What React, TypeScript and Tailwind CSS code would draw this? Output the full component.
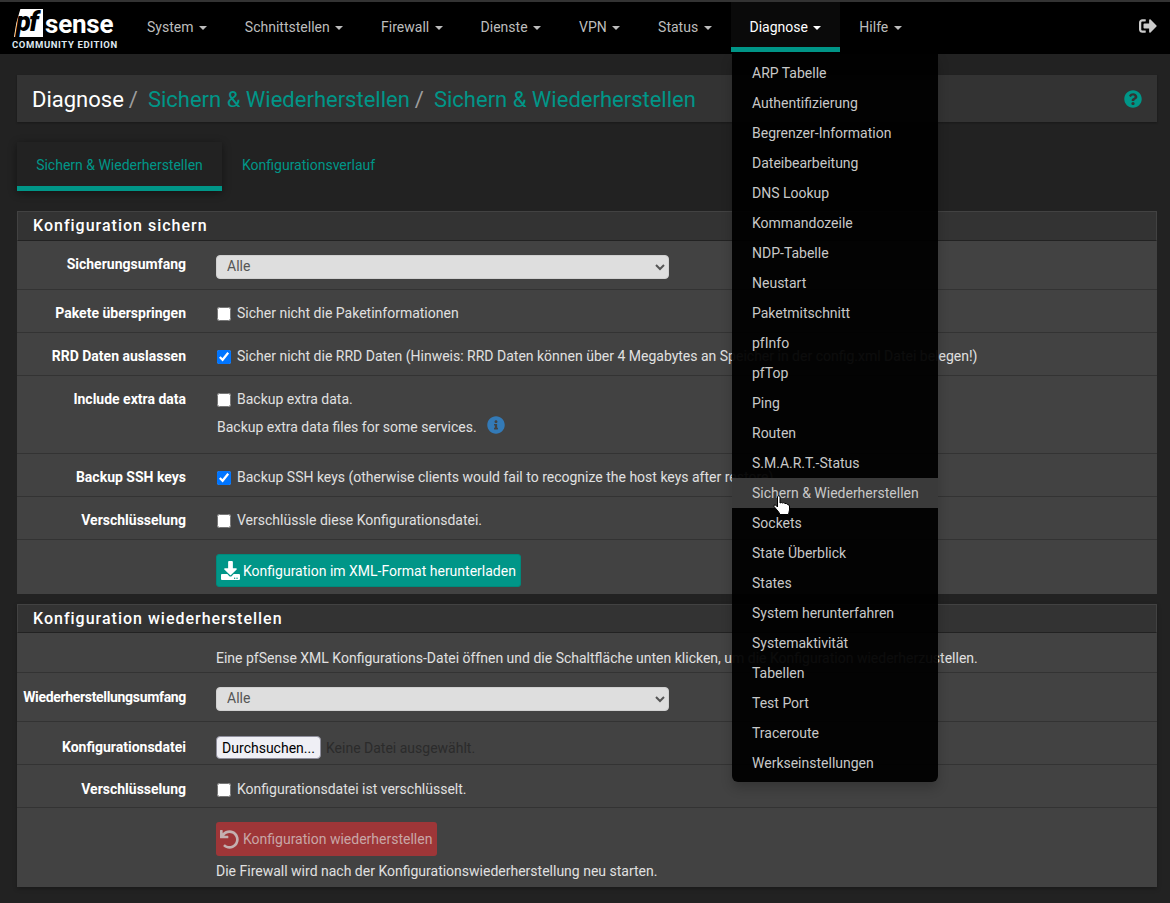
import React from "react";
import { FaSignOutAlt, FaQuestionCircle, FaInfoCircle, FaDownload, FaUndo } from "react-icons/fa";

const navItems = ["System", "Schnittstellen", "Firewall", "Dienste", "VPN", "Status", "Diagnose", "Hilfe"];
const menu = [
  "ARP Tabelle", "Authentifizierung", "Begrenzer-Information", "Dateibearbeitung", "DNS Lookup", "Kommandozeile",
  "NDP-Tabelle", "Neustart", "Paketmitschnitt", "pfInfo", "pfTop", "Ping", "Routen", "S.M.A.R.T.-Status",
  "Sichern & Wiederherstellen", "Sockets", "State Überblick", "States", "System herunterfahren", "Systemaktivität",
  "Tabellen", "Test Port", "Traceroute", "Werkseinstellungen",
];

function Row({ label, top, children, last, labelClass }: { label?: string; top: string; children: React.ReactNode; last?: boolean; labelClass?: string }) {
  return (
    <div className={`flex ${top} ${last ? "" : "border-b border-[#333]"}`}>
      <div className={`w-[169px] shrink-0 text-right text-[14px] leading-5 font-bold text-white whitespace-nowrap ${labelClass ?? ""}`}>{label}</div>
      <div className="ml-[30px] flex-1 text-[14px] leading-5 text-[#e0e0e0]">{children}</div>
    </div>
  );
}

function Check({ checked, text }: { checked?: boolean; text: string }) {
  return (
    <label className="flex items-center h-5 whitespace-nowrap">
      <input type="checkbox" defaultChecked={checked} className="w-[14px] h-[14px] ml-[1px] mr-[6px] mt-[2px] shrink-0" />
      <span>{text}</span>
    </label>
  );
}

function Heading({ text, h }: { text: string; h: string }) {
  return (
    <div className={`${h} bg-[#333] border border-[#424242] border-b-[#222] pl-[15px] flex items-center text-[16px] font-medium tracking-[1px] text-white`}>
      {text}
    </div>
  );
}

function Select() {
  return (
    <select className="block w-[453px] h-[24px] rounded-[4px] bg-[#dedede] text-[#555] text-[14px] pl-[6px] pb-[2px] border border-[#d0d0d0]">
      <option>Alle</option>
    </select>
  );
}

export default function App() {
  return (
    <div className="relative w-[1170px] h-[903px] overflow-hidden bg-[#222] [font-family:Roboto,sans-serif]">
      {/* nav */}
      <div className="h-[2px] bg-[#333]" />
      <nav className="h-[52px] bg-black flex items-start text-[14px]">
        <div className="w-[128px] shrink-0 flex flex-col pl-[12px] pt-[7px]">
          <div className="flex items-center h-[28px]">
            <div className="relative ml-[2px] w-[29px] h-[28px] bg-white [clip-path:polygon(22%_0,100%_0,100%_100%,0_100%,8%_50%)]">
              <span className="absolute left-[2px] top-0 text-[27px] leading-[26px] font-black italic text-black tracking-[-1.5px]">pf</span>
            </div>
            <span className="ml-[2px] mt-[2px] text-[26px] leading-[28px] font-bold text-white tracking-[-0.2px] [font-family:'Open_Sans',sans-serif]">sense</span>
          </div>
          <span className="mt-[2px] text-[9.5px] leading-[11px] font-bold tracking-[0.62px] text-[#dfe8ef] whitespace-nowrap">COMMUNITY EDITION</span>
        </div>
        {navItems.map((n) => {
          const active = n === "Diagnose";
          return (
            <div
              key={n}
              className={`h-[50px] flex items-center px-[19px] whitespace-nowrap ${
                active ? "bg-[#0a0a0a] border-b-[5px] border-[#009688] text-white pt-[5px]" : "text-[#bdbdbd]"
              }`}
            >
              {n}
              <span className={`ml-[5.4px] mt-[1px] w-0 h-0 border-x-[4px] border-x-transparent border-t-[4px] ${active ? "border-t-white" : "border-t-[#bdbdbd]"}`} />
            </div>
          );
        })}
        <div className="ml-auto pr-[13px] pt-[15px] text-[#cccccc]">
          <FaSignOutAlt className="w-[18px] h-[18px]" />
        </div>
      </nav>

      {/* content */}
      <main className="pl-[17px] pr-[13px]">
        <div className="mt-[21px] h-[47px] pt-[1px] bg-[#333] shadow-[0_1px_2px_rgba(0,0,0,.3)] flex items-center pl-[15px] pr-[15px] text-[22px] whitespace-nowrap">
          <span className="text-white">Diagnose</span>
          <span className="text-[#9e9e9e] ml-[5px] mr-[10px]">/</span>
          <span className="text-[#009688]">Sichern &amp; Wiederherstellen</span>
          <span className="text-[#9e9e9e] ml-[5px] mr-[10px]">/</span>
          <span className="text-[#009688]">Sichern &amp; Wiederherstellen</span>
          <FaQuestionCircle className="ml-auto w-[18px] h-[18px] text-[#009688] shrink-0" />
        </div>

        <div className="mt-[20px] h-[49px] flex text-[14px] text-[#009688]">
          <div className="w-[205px] h-[49px] flex items-center justify-center pt-[2px] border-b-[5px] border-[#009688] bg-[#222] shadow-[0_2px_8px_rgba(0,0,0,.45)]">
            Sichern &amp; Wiederherstellen
          </div>
          <div className="ml-[20px] h-[44px] pt-[2px] flex items-center">Konfigurationsverlauf</div>
        </div>

        <section className="mt-[20px]">
          <Heading text="Konfiguration sichern" h="h-[30px]" />
          <div className="bg-[#424242]">
            <Row label="Sicherungsumfang" top="h-[49px] pt-[13px]">
              <div className="pt-[1px]">
                <Select />
              </div>
            </Row>
            <Row label="Pakete überspringen" top="h-[43px] pt-[13px]">
              <Check text="Sicher nicht die Paketinformationen" />
            </Row>
            <Row label="RRD Daten auslassen" top="h-[43px] pt-[13px]">
              <Check checked text="Sicher nicht die RRD Daten (Hinweis: RRD Daten können über 4 Megabytes an Speicher in der config.xml Datei belegen!)" />
            </Row>
            <Row label="Include extra data" top="h-[78px] pt-[13px]">
              <Check text="Backup extra data." />
              <div className="mt-[8px] flex items-center h-5 whitespace-nowrap pl-[1px]">
                Backup extra data files for some services.
                <FaInfoCircle className="ml-[10px] -mt-[4px] w-[18px] h-[18px] text-[#337ab7] shrink-0" />
              </div>
            </Row>
            <Row label="Backup SSH keys" top="h-[43px] pt-[13px]">
              <Check checked text="Backup SSH keys (otherwise clients would fail to recognize the host keys after restore)" />
            </Row>
            <Row label="Verschlüsselung" top="h-[43px] pt-[13px]">
              <Check text="Verschlüssle diese Konfigurationsdatei." />
            </Row>
            <Row top="h-[54px] pt-[14px]" last>
              <button className="h-[33px] w-[305px] rounded-[3px] bg-[#009688] border border-[#00897b] text-white flex items-center pl-[4px] whitespace-nowrap">
                <FaDownload className="w-[19px] h-[19px] mr-[3px] shrink-0" />
                Konfiguration im XML-Format herunterladen
              </button>
            </Row>
          </div>
        </section>

        <section className="mt-[10px] shadow-[0_2px_4px_rgba(0,0,0,.25)]">
          <Heading text="Konfiguration wiederherstellen" h="h-[29px]" />
          <div className="bg-[#424242]">
            <Row top="h-[40px] pt-[15px]">
              <span className="whitespace-nowrap">Eine pfSense XML Konfigurations-Datei öffnen und die Schaltfläche unten klicken, um die Konfiguration wiederherzustellen.</span>
            </Row>
            <Row label="Wiederherstellungsumfang" labelClass="tracking-[-0.33px]" top="h-[49px] pt-[14px]">
              <Select />
            </Row>
            <Row label="Konfigurationsdatei" top="h-[43px] pt-[15px]">
              <div className="flex items-center h-[23px] -mt-[1px] whitespace-nowrap">
                <button className="h-[23px] w-[105px] rounded-[4px] bg-[#efeff5] border border-[#8f8f9d] text-black text-[14px]">Durchsuchen...</button>
                <span className="ml-[5px] text-[#2b2b2b]">Keine Datei ausgewählt.</span>
              </div>
            </Row>
            <Row label="Verschlüsselung" top="h-[43px] pt-[14px]">
              <Check text="Konfigurationsdatei ist verschlüsselt." />
            </Row>
            <Row top="h-[79px] pt-[14px]" last>
              <button className="h-[34px] w-[221px] rounded-[3px] bg-[#9e3638] text-[#c8a6a6] flex items-center pl-[4px] whitespace-nowrap">
                <FaUndo className="w-[19px] h-[19px] mr-[4px] text-[#c4b0b0] shrink-0" />
                Konfiguration wiederherstellen
              </button>
              <div className="mt-[5px] whitespace-nowrap">Die Firewall wird nach der Konfigurationswiederherstellung neu starten.</div>
            </Row>
          </div>
        </section>
      </main>

      {/* dropdown */}
      <div className="absolute left-[732px] top-[54px] w-[206px] bg-black/95 rounded-b-[6px] py-[4px] shadow-[0_6px_12px_rgba(0,0,0,.2)] text-[14px] text-[#c8c8c8]">
        {menu.map((m, i) => (
          <div key={i} className={`h-[30px] leading-[30px] pl-[20px] whitespace-nowrap ${m.startsWith("Sichern") ? "bg-[#3a3a3a]" : ""}`}>
            {m}
          </div>
        ))}
      </div>
      {/* cursor */}
      <svg className="absolute left-[773px] top-[495px]" width="18" height="21" viewBox="0 0 18 21">
        <path
          d="M4.500 1.500Q5.700 0 7 1.500V8Q8.500 7 9.500 8Q11 7 12 8.500Q13.500 8 14.500 9.500Q16 9.500 16.500 11V15Q16 17 15.500 19.500H7Q6 17 4 15L1 11.500Q.5 9.500 2.500 10L4.500 12Z"
          fill="#fff"
          stroke="#000"
          strokeWidth="1"
        />
      </svg>
    </div>
  );
}
